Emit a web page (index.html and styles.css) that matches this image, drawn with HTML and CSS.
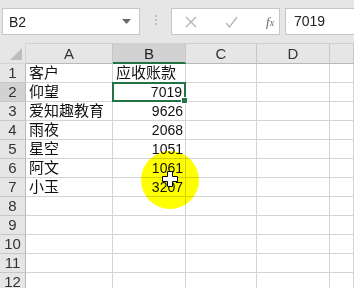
FILE: index.html
```html
<!DOCTYPE html>
<html lang="zh-CN">
<head>
    <meta charset="UTF-8">
    <title>应收账款</title>
    <link rel="stylesheet" href="styles.css">
</head>
<body>
    <div class="toolbar">
        <div class="namebox">
            <span>B2</span>
            <svg class="dropdown" width="9" height="5" viewBox="0 0 9 5"><path d="M0 0h9L4.5 5z" fill="#6a6a6a"/></svg>
        </div>
        <div class="dots"><i></i><i></i><i></i></div>
        <div class="buttons">
            <svg width="12" height="12" viewBox="0 0 12 12"><path d="M1 1l10 10M11 1L1 11" stroke="#b4b4b4" stroke-width="1.3"/></svg>
            <svg width="13" height="12" viewBox="0 0 13 12"><path d="M1 7l3.5 4L12 1" stroke="#b4b4b4" stroke-width="1.3" fill="none"/></svg>
            <span class="fx">f<small>x</small></span>
        </div>
        <div class="formula">7019</div>
    </div>

    <div class="sheet">
        <div class="corner"></div>
        <div class="colhead">A</div>
        <div class="colhead active">B</div>
        <div class="colhead">C</div>
        <div class="colhead">D</div>
        <div class="colhead"></div>

        <div class="rowhead">1</div><div class="cell">客户</div><div class="cell">应收账款</div><div class="cell"></div><div class="cell"></div><div class="cell"></div>
        <div class="rowhead active">2</div><div class="cell">仰望</div><div class="cell num selected">7019<i class="handle"></i></div><div class="cell"></div><div class="cell"></div><div class="cell"></div>
        <div class="rowhead">3</div><div class="cell">爱知趣教育</div><div class="cell num">9626</div><div class="cell"></div><div class="cell"></div><div class="cell"></div>
        <div class="rowhead">4</div><div class="cell">雨夜</div><div class="cell num">2068</div><div class="cell"></div><div class="cell"></div><div class="cell"></div>
        <div class="rowhead">5</div><div class="cell">星空</div><div class="cell num">1051</div><div class="cell"></div><div class="cell"></div><div class="cell"></div>
        <div class="rowhead">6</div><div class="cell">阿文</div><div class="cell num">1061</div><div class="cell"></div><div class="cell"></div><div class="cell"></div>
        <div class="rowhead">7</div><div class="cell">小玉</div><div class="cell num">3207</div><div class="cell"></div><div class="cell"></div><div class="cell"></div>
        <div class="rowhead">8</div><div class="cell"></div><div class="cell"></div><div class="cell"></div><div class="cell"></div><div class="cell"></div>
        <div class="rowhead">9</div><div class="cell"></div><div class="cell"></div><div class="cell"></div><div class="cell"></div><div class="cell"></div>
        <div class="rowhead">10</div><div class="cell"></div><div class="cell"></div><div class="cell"></div><div class="cell"></div><div class="cell"></div>
        <div class="rowhead">11</div><div class="cell"></div><div class="cell"></div><div class="cell"></div><div class="cell"></div><div class="cell"></div>
        <div class="rowhead">12</div><div class="cell"></div><div class="cell"></div><div class="cell"></div><div class="cell"></div><div class="cell"></div>

        <div class="highlight"></div>
        <svg class="cursor" width="16" height="16" viewBox="0 0 16 16">
            <path d="M5.5 0.5h5v5h5v5h-5v5h-5v-5h-5v-5h5z" fill="#fff" stroke="#000"/>
        </svg>
    </div>
</body>
</html>
```

FILE: styles.css
```css
body {
    margin: 0;
    width: 354px;
    height: 288px;
    overflow: hidden;
    background: #fff;
    font-family: "Liberation Sans", "Noto Sans CJK SC", sans-serif;
}
.toolbar {
    height: 43px;
    background: #e6e6e6;
    display: flex;
    align-items: flex-start;
    padding-top: 8px;
    box-sizing: border-box;
}
.namebox {
    margin-left: 2px;
    width: 138px;
    height: 27px;
    background: #fff;
    border: 1px solid #c6c6c6;
    box-sizing: border-box;
    display: flex;
    align-items: center;
    justify-content: space-between;
    padding: 0 8px 0 6px;
    font-size: 14px;
    color: #222;
}
.dots {
    width: 31px;
    display: flex;
    flex-direction: column;
    align-items: center;
    gap: 2px;
    padding-top: 7px;
}
.dots i {
    width: 2px;
    height: 2px;
    background: #c0c0c0;
}
.buttons {
    width: 109px;
    height: 27px;
    background: #fff;
    border: 1px solid #c6c6c6;
    box-sizing: border-box;
    display: flex;
    align-items: center;
    gap: 28px;
    padding-left: 13px;
}
.fx {
    font-family: "Liberation Serif", serif;
    font-style: italic;
    font-size: 13px;
    color: #6a6a6a;
}
.fx small {
    font-size: 10px;
}
.formula {
    margin-left: 5px;
    flex: 1;
    height: 27px;
    background: #fff;
    border: 1px solid #c6c6c6;
    border-right: none;
    box-sizing: border-box;
    padding-left: 8px;
    font-size: 14px;
    line-height: 25px;
    color: #222;
}
.sheet {
    position: relative;
    display: grid;
    grid-template-columns: 26px 87px 73px 71px 73px 1fr;
    grid-template-rows: 21px repeat(12, 19px);
    font-size: 14px;
}
.sheet > div {
    box-sizing: border-box;
    border-right: 1px solid #d4d4d4;
    border-bottom: 1px solid #d4d4d4;
}
.corner {
    background: #e6e6e6;
    position: relative;
}
.corner::after {
    content: "";
    position: absolute;
    right: 3px;
    bottom: 3px;
    border-left: 12px solid transparent;
    border-bottom: 12px solid #bdbdbd;
}
.colhead {
    background: #e6e6e6;
    border-top: 1px solid #d0d0d0;
    text-align: center;
    color: #333;
    line-height: 19px;
    font-size: 15px;
}
.sheet > .colhead {
    border-right-color: #c8c8c8;
    border-bottom-color: #b9b9b9;
}
.sheet > .colhead.active {
    background: #d2d2d2;
    border-bottom: 2px solid #217346;
    color: #222;
}
.rowhead {
    background: #e6e6e6;
    text-align: center;
    color: #333;
    font-size: 15px;
    line-height: 18px;
}
.sheet > .rowhead {
    border-right-color: #b9b9b9;
    border-bottom-color: #c8c8c8;
}
.sheet > .rowhead.active {
    background: #d2d2d2;
}
.cell {
    padding: 0 2px 0 3px;
    font-size: 15px;
    line-height: 18px;
    color: #111;
    white-space: nowrap;
}
.num {
    text-align: right;
    font-size: 14px;
}
.sheet > .selected {
    position: relative;
    border: 2px solid #217346;
    margin: -1px 0 0 -1px;
    line-height: 17px;
}
.handle {
    position: absolute;
    right: -4px;
    bottom: -4px;
    width: 5px;
    height: 5px;
    background: #217346;
    border: 1px solid #fff;
}
.highlight {
    position: absolute;
    left: 141px;
    top: 108px;
    width: 58px;
    height: 58px;
    border-radius: 50%;
    background: #ffff00;
    mix-blend-mode: multiply;
}
.sheet > .highlight {
    border: none;
}
.cursor {
    position: absolute;
    left: 162px;
    top: 128px;
}
```
